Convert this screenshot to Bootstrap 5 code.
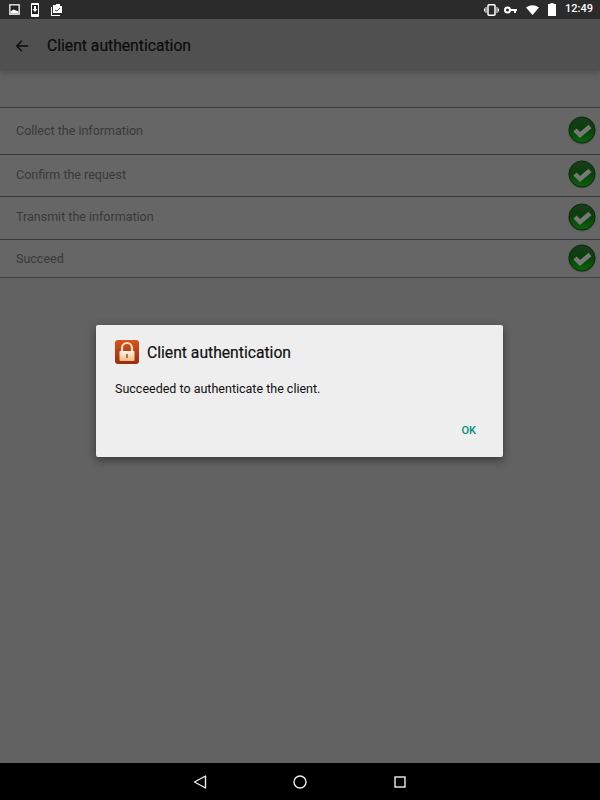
<!DOCTYPE html>
<html lang="en">
<head>
    <meta charset="UTF-8">
    <title>Client authentication</title>
    <meta name="viewport" content="width=device-width, initial-scale=1">
    <link href="https://cdn.jsdelivr.net/npm/bootstrap@5.3.3/dist/css/bootstrap.min.css" rel="stylesheet">
    <style>
        html, body { height: 100%; }
        body { font-family: Roboto, "Liberation Sans", sans-serif; background: #000; overflow: hidden; }
        .status-bar { height: 19px; background: #2b2b2b; color: #fff; font-size: 11px; font-weight: 500; padding: 0 7px 0 9px; }
        .status-left { gap: 10px; }
        .status-right { gap: 5px; }
        .app-main { height: 744px; background: #f6f6f6; }
        .app-bar { height: 52px; background: #c8c8c8; color: #1c1c1c; padding: 2px 0 0 15px; box-shadow: 0 2px 7px rgba(0,0,0,.22); }
        .app-title { font-size: 15.7px; font-weight: 400; margin-left: 18px; -webkit-text-stroke: .2px #1c1c1c; }
        .step-list { margin-top: 36px; background: #fff; }
        .step-row { height: 42.5px; border-bottom: 1px solid #8c8c8c; padding: 0 3px 0 16px; font-size: 12.5px; color: #909090; }
        .step-row:first-child { border-top: 1px solid #8c8c8c; height: 47.5px; padding-top: 1px; }
        .step-row:last-child { height: 38px; padding-top: 3px; border-bottom-color: #a8a8a8; }
        .step-check { position: relative; z-index: 1; flex: none; margin-bottom: 2px; }
        .step-row:last-child .step-check { margin-bottom: 4px; }
        .dim-layer { inset: 0; background: rgba(0,0,0,.6); }
        .auth-dialog { left: 96px; top: 306px; width: 407px; height: 132px; background: #eee; border-radius: 2px; box-shadow: 0 3px 10px rgba(0,0,0,.45); padding: 15px 19px; }
        .dialog-title { font-size: 15.7px; font-weight: 400; color: #111; margin: 1px 0 0 8px; -webkit-text-stroke: .2px #111; }
        .dialog-text { font-size: 12.5px; color: #111; margin-top: 15px; }
        .dialog-ok { font-size: 11px; font-weight: 500; color: #009080; padding: 0; margin: 25px 8px 0 0; border: 0; background: none; }
        .nav-strip { height: 37px; background: #000; }
        .nav-strip svg { display: block; }
        .nav-home { margin: 0 86px; }
    </style>
</head>
<body>

    <div class="status-bar d-flex align-items-center justify-content-between">
        <div class="status-left d-flex align-items-center">
            <svg width="11" height="11" viewBox="0 0 11 11"><rect x=".8" y=".8" width="9.400" height="9.400" fill="#222" stroke="#ddd" stroke-width="1.500"/><path d="M1.500 9.500V7.500l3-2 5 2v2z" fill="#fff"/></svg>
            <svg width="10" height="14" viewBox="0 0 10 14"><rect x="1" y="0" width="8" height="14" rx="1" fill="#fff"/><rect x="2" y="2" width="6" height="9" fill="#222"/><path d="M4 3h2v3h1.500L5 9 2.500 6H4z" fill="#fff"/></svg>
            <svg width="13" height="13" viewBox="0 0 13 13"><path d="M3 2h3V1h4v2h2v7H3z" fill="#fff"/><path d="M1 4h1v8h8v1H1z" fill="#fff"/><path d="M5 7l2 1 3-3" fill="none" stroke="#555"/></svg>
        </div>
        <div class="status-right d-flex align-items-center">
            <svg width="15" height="12" viewBox="0 0 15 12"><rect x="4" y=".8" width="7" height="10.400" rx="1" fill="none" stroke="#fff" stroke-width="1.500"/><path d="M2 3v6M0.500 4.500v3M13 3v6M14.500 4.500v3" stroke="#fff"/></svg>
            <svg width="13" height="8" viewBox="0 0 13 8"><circle cx="3.500" cy="4" r="2.500" fill="none" stroke="#fff" stroke-width="2"/><path d="M6 3h7v2h-1v2h-2V5H6z" fill="#fff"/></svg>
            <svg class="ms-1" width="13" height="10" viewBox="0 0 13 10"><path d="M0 2.500Q6.500-2 13 2.500L6.500 10z" fill="#fff"/></svg>
            <svg class="ms-1" width="8" height="13" viewBox="0 0 8 13"><path d="M2.500 0h3v1H8v12H0V1h2.500z" fill="#fff"/></svg>
            <span class="ms-1">12:49</span>
        </div>
    </div>

    <div class="app-main position-relative overflow-hidden">
        <div class="app-bar d-flex align-items-center">
            <svg width="14" height="14" viewBox="0 0 16 16"><path d="M15 8H2M8 2L2 8l6 6" fill="none" stroke="#1c1c1c" stroke-width="1.500"/></svg>
            <div class="app-title">Client authentication</div>
        </div>

        <div class="step-list">
            <div class="step-row d-flex align-items-center justify-content-between">
                <span>Collect the information</span>
                <svg class="step-check" width="30" height="30" viewBox="0 0 30 30"><use href="#check-icon"/></svg>
            </div>
            <div class="step-row d-flex align-items-center justify-content-between">
                <span>Confirm the request</span>
                <svg class="step-check" width="30" height="30" viewBox="0 0 30 30"><use href="#check-icon"/></svg>
            </div>
            <div class="step-row d-flex align-items-center justify-content-between">
                <span>Transmit the information</span>
                <svg class="step-check" width="30" height="30" viewBox="0 0 30 30"><use href="#check-icon"/></svg>
            </div>
            <div class="step-row d-flex align-items-center justify-content-between">
                <span>Succeed</span>
                <svg class="step-check" width="30" height="30" viewBox="0 0 30 30"><use href="#check-icon"/></svg>
            </div>
        </div>

        <div class="dim-layer position-absolute"></div>

        <div class="auth-dialog position-absolute">
            <div class="d-flex align-items-center">
                <svg width="24" height="24" viewBox="0 0 24 24">
                    <defs>
                        <linearGradient id="lock-bg" x1="0" y1="0" x2="0" y2="1"><stop offset="0" stop-color="#d4561a"/><stop offset="1" stop-color="#9c2a0c"/></linearGradient>
                        <linearGradient id="lock-body" x1="0" y1="0" x2="0" y2="1"><stop offset="0" stop-color="#fff6ec"/><stop offset="1" stop-color="#eebb80"/></linearGradient>
                    </defs>
                    <rect width="24" height="24" rx="3" fill="url(#lock-bg)"/>
                    <path d="M7 11V8a5 5 0 0 1 10 0v3" fill="none" stroke="#f6ddc8" stroke-width="2.200"/>
                    <rect x="4.500" y="11" width="15" height="10" rx="1" fill="url(#lock-body)"/>
                    <rect x="11.400" y="14" width="1.200" height="4" fill="#6b3a1a"/>
                </svg>
                <div class="dialog-title">Client authentication</div>
            </div>
            <div class="dialog-text">Succeeded to authenticate the client.</div>
            <div class="text-end"><button class="dialog-ok">OK</button></div>
        </div>
    </div>

    <div class="nav-strip d-flex align-items-center justify-content-center">
        <svg width="14" height="14" viewBox="0 0 14 14"><path d="M12.500 1v12L1.500 7z" fill="none" stroke="#eee" stroke-width="1.400" stroke-linejoin="round"/></svg>
        <svg class="nav-home" width="14" height="14" viewBox="0 0 14 14"><circle cx="7" cy="7" r="6" fill="none" stroke="#eee" stroke-width="1.400"/></svg>
        <svg width="14" height="14" viewBox="0 0 14 14"><rect x="2" y="2" width="10" height="10" fill="none" stroke="#eee" stroke-width="1.400"/></svg>
    </div>

    <svg width="0" height="0" class="position-absolute">
        <defs>
            <linearGradient id="check-bg" x1="0" y1="0" x2="0" y2="1"><stop offset="0" stop-color="#1c3a1c"/><stop offset=".45" stop-color="#0a3f0a"/><stop offset="1" stop-color="#0a640a"/></linearGradient>
            <radialGradient id="check-halo"><stop offset=".8" stop-color="#2a2a2a"/><stop offset="1" stop-color="#666" stop-opacity="0"/></radialGradient>
            <g id="check-icon">
                <circle cx="15" cy="15.500" r="15" fill="url(#check-halo)"/>
                <circle cx="15" cy="15" r="13" fill="url(#check-bg)" stroke="#0c2c0c"/>
                <path d="M8 15l5 5 10-8.500" fill="none" stroke="#787878" stroke-width="4.500"/>
            </g>
        </defs>
    </svg>

</body>
</html>
